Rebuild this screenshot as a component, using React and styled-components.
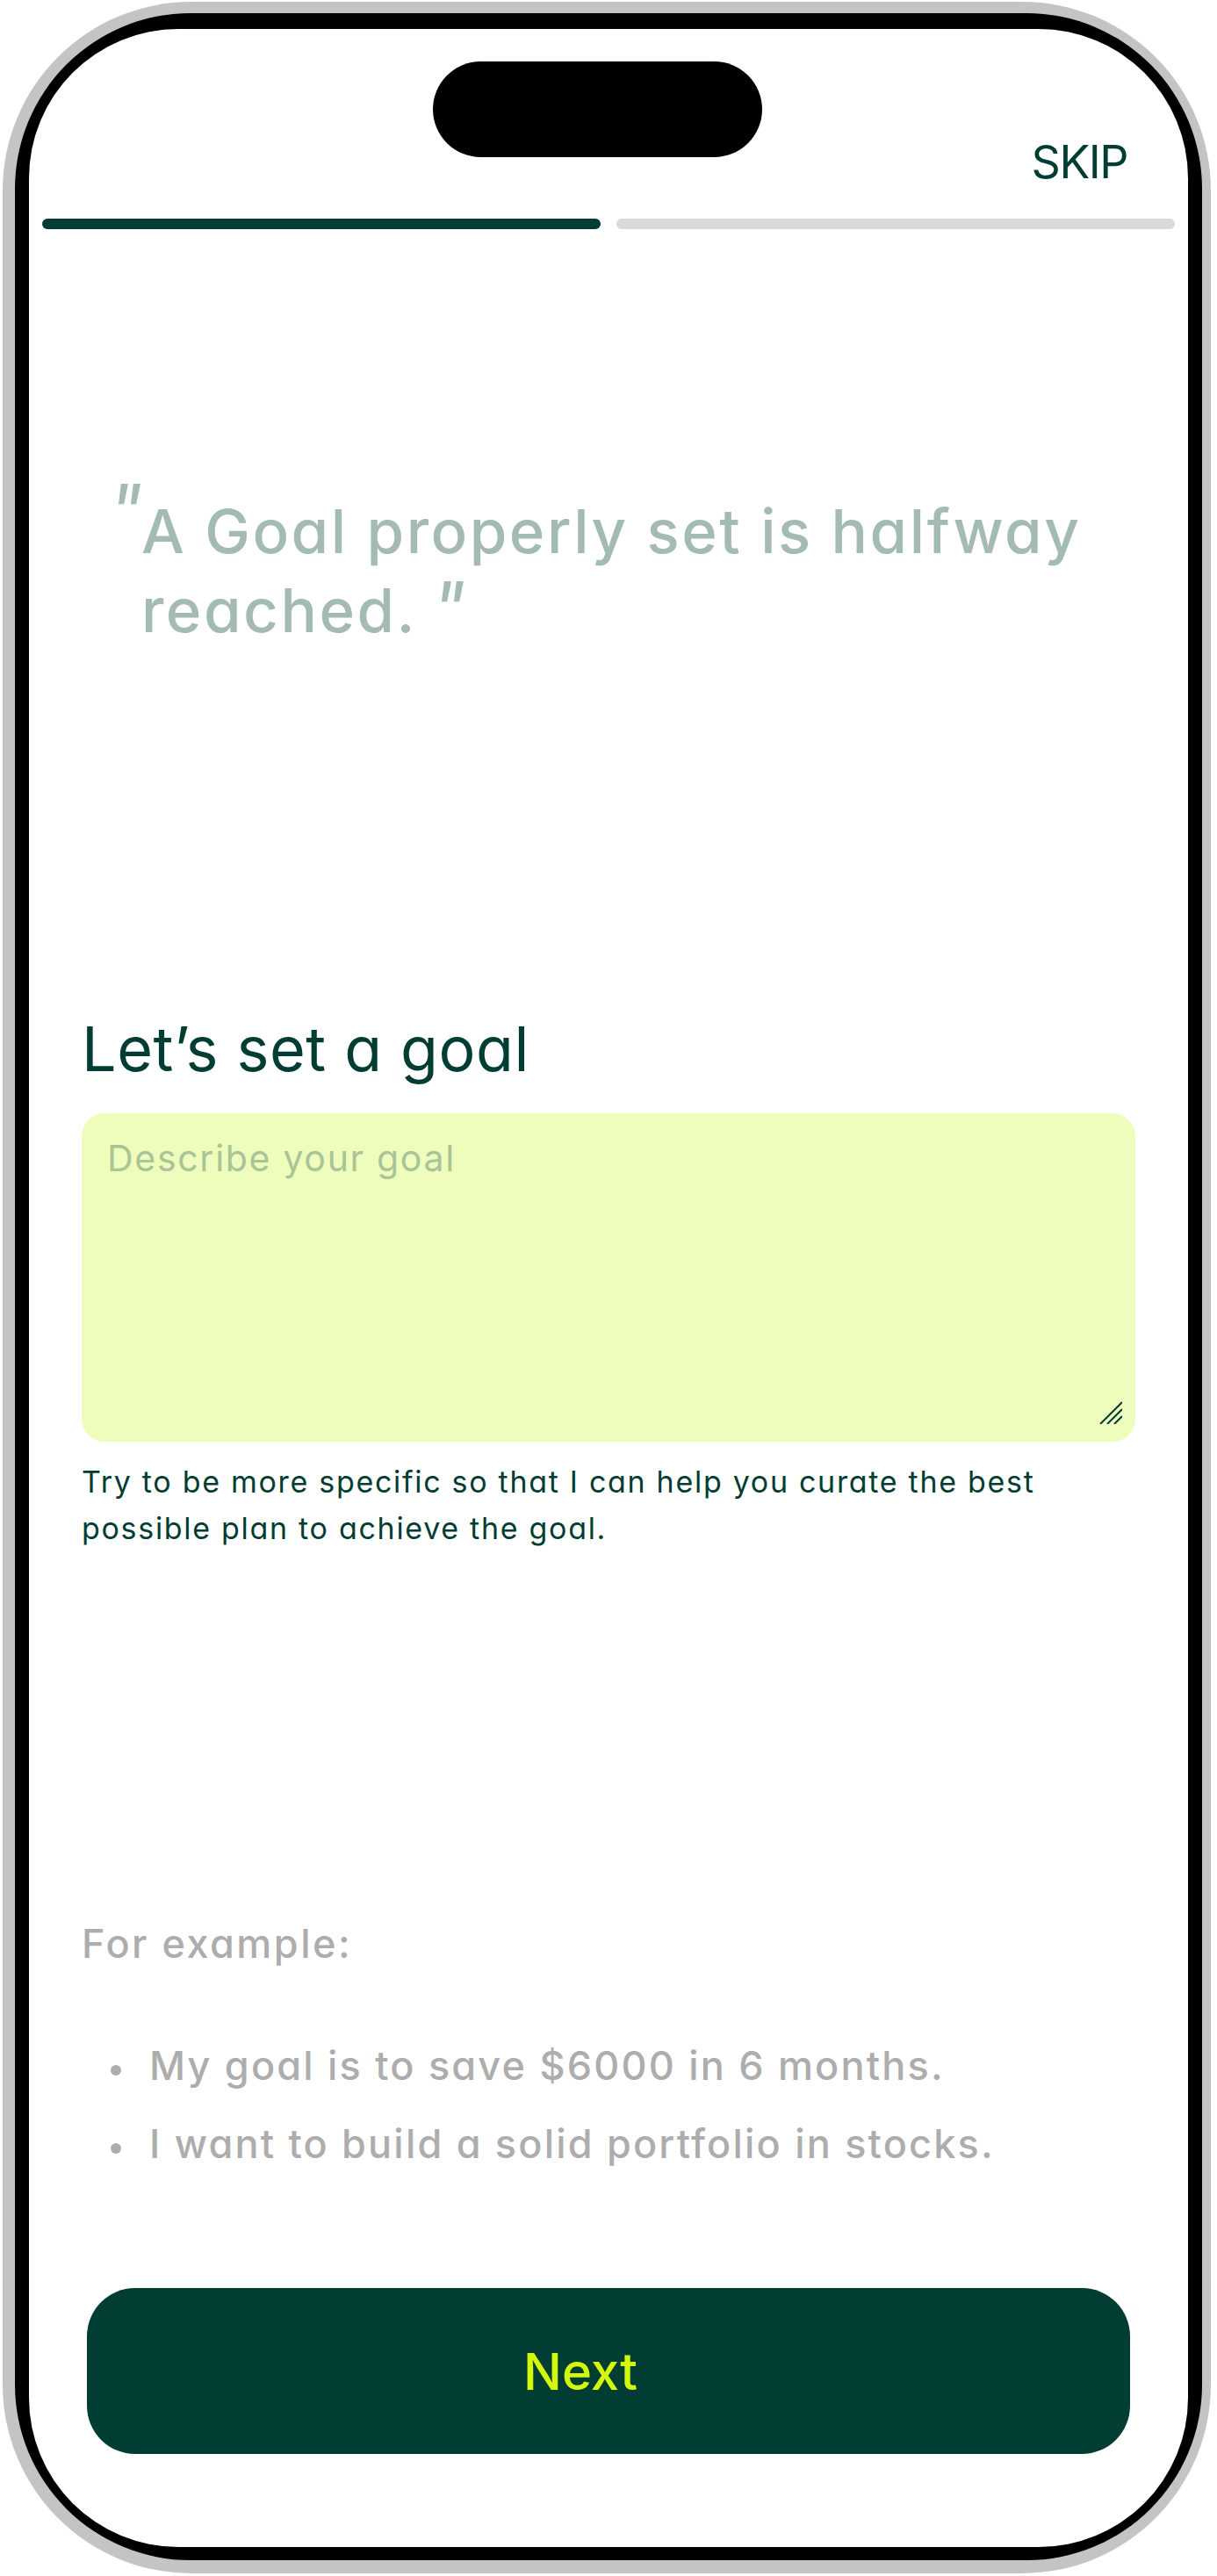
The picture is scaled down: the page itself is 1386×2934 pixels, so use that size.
import React from 'react';
import styled, { createGlobalStyle } from 'styled-components';

const GREEN = '#023d34';
const LIME = '#d3f80c';

export default function App() {
  return (
    <>
      <GlobalStyle />
      <Page>
        <Shell>
          <Bezel>
            <Screen>
              <TopBar>
                <Island />
                <SkipButton type="button">SKIP</SkipButton>
              </TopBar>

              <Progress>
                <Step $done />
                <Step />
              </Progress>

              <Content>
                <Quote>
                  <QuoteMark $lift={18} $open>"</QuoteMark>
                  A Goal properly set is halfway reached.
                  <QuoteMark $lift={-3}>"</QuoteMark>
                </Quote>

                <Heading>Let’s set a goal</Heading>

                <FieldWrapper>
                  <GoalInput placeholder="Describe your goal" />
                  <ResizeGrip viewBox="0 0 26 26">
                    <path d="M1 26 L26 1 M9 26 L26 9 M17 26 L26 17" />
                  </ResizeGrip>
                </FieldWrapper>

                <Hint>
                  Try to be more specific so that I can help you curate the best
                  possible plan to achieve the goal.
                </Hint>

                <ExampleTitle>For example:</ExampleTitle>
                <ExampleList>
                  <li>My goal is to save $6000 in 6 months.</li>
                  <li>I want to build a solid portfolio in stocks.</li>
                </ExampleList>

                <NextButton type="button">Next</NextButton>
              </Content>
            </Screen>
          </Bezel>
        </Shell>
      </Page>
    </>
  );
}

/// /////////////////////////
/// Global
const GlobalStyle = createGlobalStyle`
  html, body {
    margin: 0;
    padding: 0;
    background: #fff;
  }
  body {
    font-family: Inter, "Noto Sans", sans-serif;
    font-feature-settings: "cv11";
  }
  * { box-sizing: border-box; }
`;

/// /////////////////////////
/// Phone frame
const Page = styled.div`
  width: 1386px;
  height: 2934px;
  padding: 2px 0 0 3px;
`;

const Shell = styled.div`
  width: 1376px;
  height: 2929px;
  padding: 13px 10px 15px 14px;
  border-radius: 215px;
  background: #c4c4c4;
`;

const Bezel = styled.div`
  height: 100%;
  padding: 18px 16px 15px 16px;
  border-radius: 200px;
  background: #000;
`;

const Screen = styled.div`
  height: 100%;
  display: flex;
  flex-direction: column;
  border-radius: 170px;
  background: #fff;
  overflow: hidden;
`;

/// /////////////////////////
/// Header
const TopBar = styled.div`
  display: grid;
  grid-template-columns: 460px 375px 1fr;
  align-items: start;
  padding-top: 37px;
`;

const Island = styled.div`
  grid-column: 2;
  height: 109px;
  border-radius: 55px;
  background: #000;
`;

const SkipButton = styled.button`
  grid-column: 3;
  justify-self: end;
  margin: 89px 69px 0 0;
  padding: 0;
  border: 0;
  background: none;
  font-family: inherit;
  font-size: 52px;
  line-height: 52px;
  letter-spacing: -1.5px;
  color: ${GREEN};
`;

const Progress = styled.div`
  display: flex;
  gap: 18px;
  margin-top: 38px;
  padding: 0 15px;
`;

const Step = styled.div`
  flex: 1;
  height: 12px;
  border-radius: 6px;
  background: ${(p) => (p.$done ? GREEN : '#d9d9d9')};
`;

/// /////////////////////////
/// Body
const Content = styled.div`
  display: flex;
  flex-direction: column;
  padding: 0 60px;
`;

const Quote = styled.p`
  margin: 299px 0 0;
  padding-left: 68px;
  font-size: 69px;
  font-weight: 500;
  line-height: 90px;
  letter-spacing: 2.5px;
  color: #a4bbb5;
`;

const QuoteMark = styled.span`
  display: inline-block;
  margin-left: ${(p) => (p.$open ? '-38px' : '16px')};
  width: ${(p) => (p.$open ? '38px' : 'auto')};
  font-size: 84px;
  font-weight: 400;
  font-style: italic;
  line-height: 0;
  letter-spacing: 0;
  vertical-align: ${(p) => p.$lift}px;
`;

const Heading = styled.h1`
  margin: 413px 0 0;
  font-size: 70px;
  font-weight: 400;
  line-height: 84px;
  letter-spacing: 0.6px;
  color: ${GREEN};
`;

const FieldWrapper = styled.div`
  position: relative;
  margin-top: 31px;
`;

const GoalInput = styled.textarea`
  display: block;
  width: 100%;
  height: 374px;
  padding: 25px 29px;
  border: 0;
  border-radius: 26px;
  background: #eefdbc;
  resize: none;
  outline: none;
  font-family: inherit;
  font-size: 41px;
  line-height: 53px;
  letter-spacing: 1.7px;
  color: ${GREEN};

  &::placeholder {
    color: #a9c497;
  }
`;

const ResizeGrip = styled.svg`
  position: absolute;
  right: 15px;
  bottom: 20px;
  width: 26px;
  height: 26px;
  fill: none;
  stroke: ${GREEN};
  stroke-width: 2;
`;

const Hint = styled.p`
  margin: 19px 0 0;
  font-size: 34px;
  line-height: 53px;
  letter-spacing: 1.7px;
  color: ${GREEN};
`;

const ExampleTitle = styled.p`
  margin: 418px 0 0;
  font-size: 45px;
  font-weight: 500;
  line-height: 58px;
  letter-spacing: 2.5px;
  color: #adadad;
`;

const ExampleList = styled.ul`
  margin: 65px 0 0;
  padding: 0 0 0 77px;
  list-style: none;

  li {
    position: relative;
    font-size: 45px;
    font-weight: 500;
    line-height: 89px;
    letter-spacing: 2.2px;
    color: #adadad;
  }

  li::before {
    content: '';
    position: absolute;
    left: -44px;
    top: 44px;
    width: 12px;
    height: 12px;
    border-radius: 50%;
    background: #adadad;
  }
`;

const NextButton = styled.button`
  height: 189px;
  margin: 120px 6px 0;
  padding: 0 64px 0 0;
  border: 0;
  border-radius: 55px;
  background: ${GREEN};
  font-family: inherit;
  font-size: 58px;
  font-weight: 500;
  color: ${LIME};
`;
